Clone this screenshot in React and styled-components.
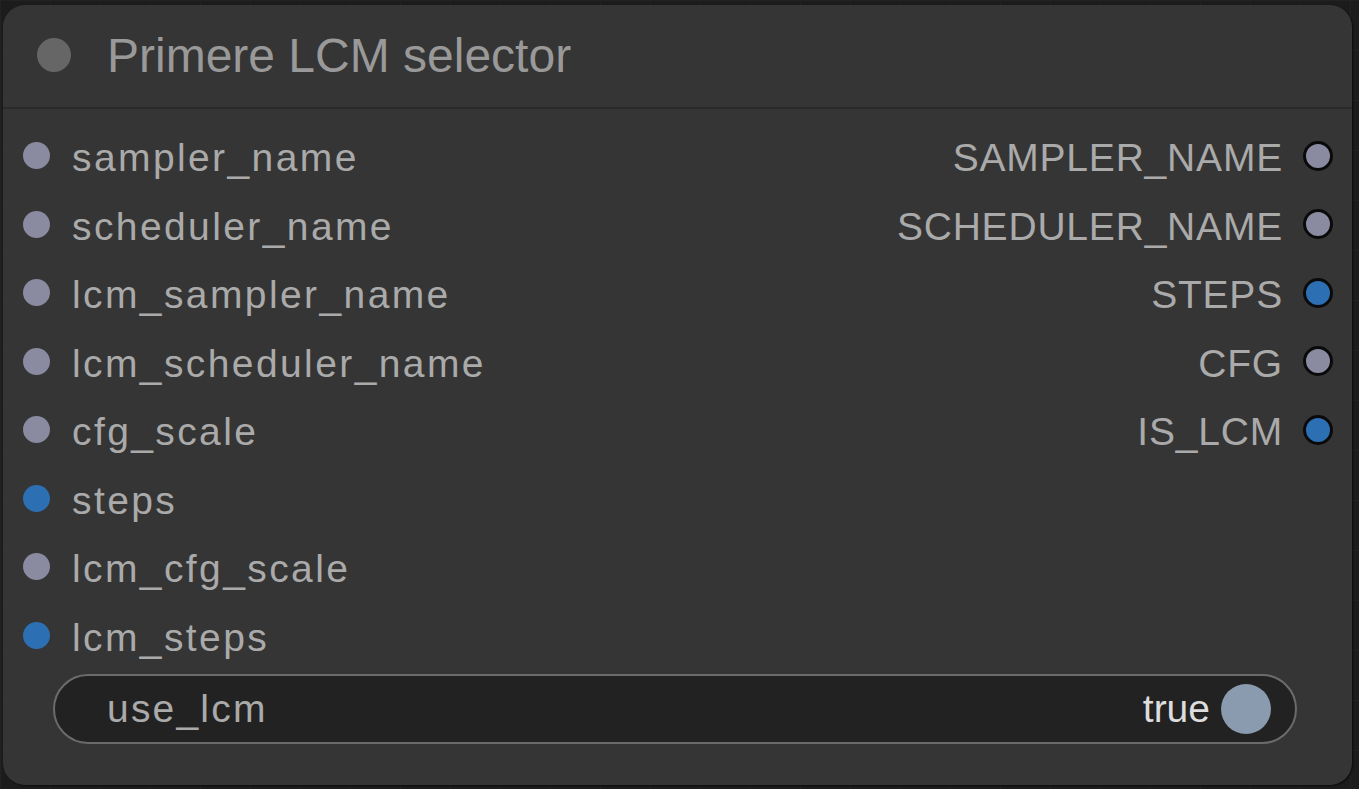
import styled, { createGlobalStyle } from 'styled-components';

const GlobalStyle = createGlobalStyle`
    html, body {
        margin:0;
        padding:0;
        background-color:#1c1c1c;
        font-family:"Liberation Sans", Arial, sans-serif;
    }
`;

const inputs = [
    { name: 'sampler_name', type: 'combo' },
    { name: 'scheduler_name', type: 'combo' },
    { name: 'lcm_sampler_name', type: 'combo' },
    { name: 'lcm_scheduler_name', type: 'combo' },
    { name: 'cfg_scale', type: 'combo' },
    { name: 'steps', type: 'int' },
    { name: 'lcm_cfg_scale', type: 'combo' },
    { name: 'lcm_steps', type: 'int' },
];

const outputs = [
    { name: 'SAMPLER_NAME', type: 'combo' },
    { name: 'SCHEDULER_NAME', type: 'combo' },
    { name: 'STEPS', type: 'int' },
    { name: 'CFG', type: 'combo' },
    { name: 'IS_LCM', type: 'int' },
];

const App = () => {
  return (
    <>
      <GlobalStyle />
      <Canvas>
        <Node>
          <TitleBar>
            <TitleDot />
            <Title>Primere LCM selector</Title>
          </TitleBar>
          <Body>
            <Slots>
              <Column>
                {inputs.map((slot) => (
                  <InputRow key={slot.name}>
                    <Dot $type={slot.type} />
                    <InputLabel>{slot.name}</InputLabel>
                  </InputRow>
                ))}
              </Column>
              <Column>
                {outputs.map((slot) => (
                  <OutputRow key={slot.name}>
                    <OutputLabel>{slot.name}</OutputLabel>
                    <Dot $type={slot.type} $output />
                  </OutputRow>
                ))}
              </Column>
            </Slots>
            <Toggle>
              <ToggleLabel>use_lcm</ToggleLabel>
              <ToggleValue>true</ToggleValue>
              <Knob />
            </Toggle>
          </Body>
        </Node>
      </Canvas>
    </>
  )
}

export default App

const Canvas = styled.div`
    width:1359px;
    height:789px;
    box-sizing:border-box;
    padding:5px 7px 4px 3px;
    background-color:#1c1c1c;
    background-image:
        linear-gradient(#222 1px, transparent 1px),
        linear-gradient(90deg, #222 1px, transparent 1px);
    background-size:50px 50px;
`;
const Node = styled.div`
    height:100%;
    background-color:#353535;
    border-radius:22px;
    box-shadow:1px 1px 2px rgba(0,0,0,0.6);
    display:flex;
    flex-direction:column;
    overflow:hidden;
`;
const TitleBar = styled.div`
    height:102px;
    flex-shrink:0;
    display:flex;
    align-items:center;
    padding-left:34px;
    border-bottom:2px solid #2a2a2a;
`;
const TitleDot = styled.span`
    width:34px;
    height:34px;
    border-radius:50%;
    background-color:#666;
    margin-right:36px;
    margin-top:-2px;
`;
const Title = styled.span`
    font-size:48px;
    color:#999;
    margin-top:-2px;
`;
const Body = styled.div`
    padding-top:15px;
    display:flex;
    flex-direction:column;
`;
const Slots = styled.div`
    display:flex;
    justify-content:space-between;
`;
const Column = styled.div`
    display:flex;
    flex-direction:column;
`;
const InputRow = styled.div`
    height:68.5px;
    display:flex;
    align-items:center;
    padding-left:20px;
`;
const OutputRow = styled.div`
    height:68.5px;
    display:flex;
    align-items:center;
    justify-content:flex-end;
    padding-right:19px;
`;
const Dot = styled.span`
    box-sizing:border-box;
    width:${props => props.$output ? '30px' : '27px'};
    height:${props => props.$output ? '30px' : '27px'};
    border-radius:50%;
    background-color:${props => props.$type === 'int' ? '#2c6fb3' : '#8a8aa0'};
    border:${props => props.$output ? '3px solid #0a0a0a' : 'none'};
    margin-top:-5px;
`;
const InputLabel = styled.span`
    margin-left:22px;
    font-size:39px;
    letter-spacing:2.4px;
    color:#aaa;
`;
const OutputLabel = styled.span`
    margin-right:20px;
    font-size:39px;
    letter-spacing:0.8px;
    color:#aaa;
`;
const Toggle = styled.div`
    margin:2px 55px 0 50px;
    height:70px;
    box-sizing:border-box;
    border:2px solid #6b6b6b;
    border-radius:35px;
    background-color:#222;
    display:flex;
    align-items:center;
    padding:0 24px 0 52px;
`;
const ToggleLabel = styled.span`
    flex:1;
    font-size:39px;
    letter-spacing:2.2px;
    color:#aaa;
`;
const ToggleValue = styled.span`
    font-size:39px;
    color:#ddd;
    margin-right:11px;
`;
const Knob = styled.span`
    width:50px;
    height:50px;
    border-radius:50%;
    background-color:#8a9bb0;
`;
